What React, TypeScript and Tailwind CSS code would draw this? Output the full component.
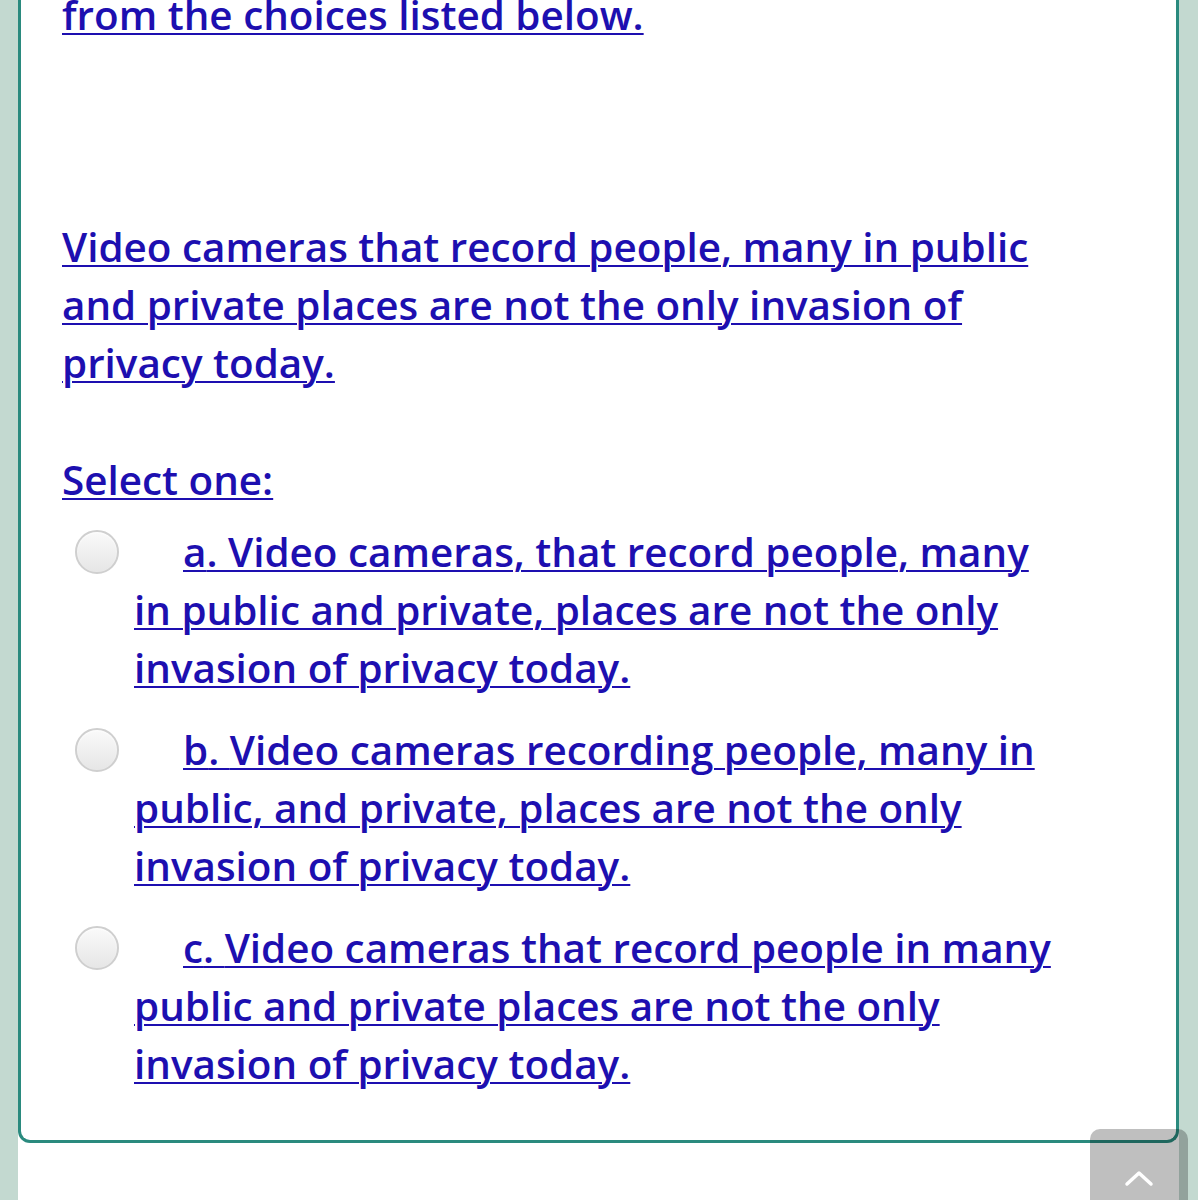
import React from "react";

const link = "text-[#1d0fb0] underline decoration-[2px] underline-offset-[3px]";

function Radio() {
  return (
    <span className="inline-block align-middle w-[44px] h-[44px] rounded-full border-2 border-[#cfcfcf] bg-gradient-to-b from-[#fafafa] to-[#e6e6e6] shadow-[inset_0_1px_2px_rgba(255,255,255,0.8)] ml-[-59px] mr-[64px] relative top-[-4px]" />
  );
}

function Option({ letter, text }: { letter: string; text: string }) {
  return (
    <div className="pl-[72px] w-[1002px]">
      <p className="leading-[58px]">
        <Radio />
        <a className={link}>
          {letter}. {text}
        </a>
      </p>
    </div>
  );
}

export default function App() {
  return (
    <div
      className="relative w-[1198px] h-[1200px] overflow-hidden bg-white grid grid-cols-[18px_1fr_19px]"
      style={{ fontFamily: '"Open Sans", "Noto Sans", sans-serif' }}
    >
      <div className="bg-[#c3d9d0]" />
      <div className="flex flex-col">
        <div className="border-[3px] border-t-0 border-[#2a8a7e] rounded-b-[12px] pl-[41px] pb-[47px] text-[40.4px] font-semibold leading-[58px]">
          <div className="mt-[-14px] w-[1002px]">
            <p>
              <a className={link}>from the choices listed below.</a>
            </p>
            <div className="h-[174px]" />
            <p>
              <a className={link}>
                Video cameras that record people, many in public and private places are not the only invasion of privacy today.
              </a>
            </p>
            <p className="mt-[59px]">
              <a className={link}>Select one:</a>
            </p>
          </div>
          <div className="mt-[14px] flex flex-col gap-[24px]">
            <Option letter="a" text="Video cameras, that record people, many in public and private, places are not the only invasion of privacy today." />
            <Option letter="b" text="Video cameras recording people, many in public, and private, places are not the only invasion of privacy today." />
            <Option letter="c" text="Video cameras that record people in many public and private places are not the only invasion of privacy today." />
          </div>
        </div>
      </div>
      <div className="bg-[#c3d9d0]" />
      <button className="absolute left-[1090px] top-[1129px] w-[98px] h-[90px] rounded-t-[10px] bg-black/25 flex justify-center pt-[40px]">
        <svg width="30" height="18" viewBox="0 0 30 18" fill="none">
          <path d="M3 15 L15 4 L27 15" stroke="white" strokeWidth="3.5" strokeLinecap="round" strokeLinejoin="round" />
        </svg>
      </button>
    </div>
  );
}
